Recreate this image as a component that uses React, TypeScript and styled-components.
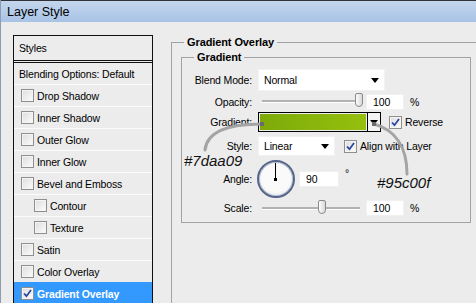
import React from "react";
import styled, { createGlobalStyle } from "styled-components";

const GlobalStyle = createGlobalStyle`
  html, body { margin: 0; padding: 0; background: #ececec; }
  body {
    font-family: "Liberation Sans", Arial, sans-serif;
    font-size: 10.5px;
    letter-spacing: -0.15px;
    color: #000;
  }
`;

const Window = styled.div`
  position: relative;
  width: 476px;
  height: 303px;
  overflow: hidden;
  box-sizing: border-box;
  background: #ececec;
  border-left: 1px solid #8e9cb1;
  display: flex;
  flex-direction: column;
`;

const TitleBar = styled.div`
  flex: none;
  height: 22px;
  box-sizing: border-box;
  border-top: 1px solid #2f3338;
  background: linear-gradient(#c4d6ed, #a8c3e6);
  padding-left: 6px;
  display: flex;
  align-items: center;
  font-size: 12.5px;
  letter-spacing: 0;
`;

const Body = styled.div`
  flex: 1;
  display: flex;
  align-items: flex-start;
  padding: 13px 0 0 12px;
`;

const StyleList = styled.div`
  flex: none;
  width: 140px;
  height: 300px;
  box-sizing: border-box;
  border: 1px solid #111;
  display: flex;
  flex-direction: column;
`;

const ListHeader = styled.div`
  height: 24px;
  border-bottom: 3px double #111;
  padding-left: 5px;
  display: flex;
  align-items: center;
`;

const ListPlain = styled.div`
  height: 21px;
  padding-left: 5px;
  display: flex;
  align-items: center;
`;

const ListItem = styled.div<{ $nested?: boolean; $active?: boolean }>`
  height: 22px;
  box-sizing: border-box;
  border-top: 1px solid ${(p) => (p.$active ? "#3399ff" : "#fbfbfb")};
  padding-left: ${(p) => (p.$nested ? 20 : 7)}px;
  display: flex;
  align-items: center;
  gap: 3px;
  background: ${(p) => (p.$active ? "#3399ff" : "transparent")};
  color: ${(p) => (p.$active ? "#fff" : "#000")};
  font-weight: ${(p) => (p.$active ? "bold" : "normal")};
`;

const Box = styled.span`
  flex: none;
  width: 13px;
  height: 13px;
  box-sizing: border-box;
  border: 1px solid #8f8f8f;
  background: linear-gradient(135deg, #dcdcdc, #fdfdfd);
  box-shadow: inset 0 0 0 1px #f4f4f4;
  display: flex;
  align-items: center;
  justify-content: center;
`;

const Check = ({ on }: { on?: boolean }) => (
  <Box>
    {on && (
      <svg width="9" height="9" viewBox="0 0 9 9">
        <path d="M1 4.5 L3.5 7.2 L8 1" fill="none" stroke="#2c45a0" strokeWidth="1.8" />
      </svg>
    )}
  </Box>
);

const Outer = styled.fieldset`
  flex: 1;
  margin: 0 -20px 0 18px;
  padding: 0 0 0 9px;
  min-width: 0;
  height: 290px;
  border: 1px solid #a2a2a2;
`;

const Legend = styled.legend<{ $shift: number }>`
  font-weight: bold;
  font-size: 11px;
  letter-spacing: -0.1px;
  line-height: 14px;
  padding: 0 3px;
  margin-left: ${(p) => p.$shift}px;
`;

const Inner = styled.fieldset`
  margin: 1px 0 0 0;
  width: 290px;
  box-sizing: border-box;
  padding: 4px 0 4px 0;
  border: 1px solid #a2a2a2;
  display: flex;
  flex-direction: column;
`;

const Row = styled.div<{ $h: number }>`
  height: ${(p) => p.$h}px;
  display: flex;
  align-items: center;
`;

const Label = styled.span`
  flex: none;
  width: 70px;
  text-align: right;
  margin-right: 6px;
`;

const Select = styled.div<{ $w: number; $h: number }>`
  width: ${(p) => p.$w}px;
  height: ${(p) => p.$h}px;
  box-sizing: border-box;
  background: #fff;
  border: 1px solid #f2f2f2;
  padding: 0 5px;
  display: flex;
  align-items: center;
  justify-content: space-between;
`;

const Arrow = () => (
  <svg width="8" height="5" viewBox="0 0 8 5">
    <path d="M0 0 H8 L4 5 Z" fill="#000" />
  </svg>
);

const Slider = styled.div`
  position: relative;
  margin-left: 4px;
  width: 98px;
  height: 2px;
  background: #b2b2b2;
  border-bottom: 1px solid #fff;
`;

const Thumb = styled.span`
  position: absolute;
  top: -7px;
  width: 8px;
  height: 14px;
  box-sizing: border-box;
  border: 1px solid #8a8a8a;
  border-radius: 2px 2px 4px 4px;
  background: linear-gradient(90deg, #fdfdfd, #d8d8d8);
`;

const NumBox = styled.div<{ $w: number; $ml: number }>`
  width: ${(p) => p.$w}px;
  height: 16px;
  margin-left: ${(p) => p.$ml}px;
  box-sizing: border-box;
  background: #fff;
  border: 1px solid #f0f0f0;
  padding-left: 6px;
  display: flex;
  align-items: center;
`;

const Unit = styled.span<{ $up?: boolean }>`
  margin-left: 6px;
  align-self: ${(p) => (p.$up ? "flex-start" : "center")};
  margin-top: ${(p) => (p.$up ? 8 : 0)}px;
`;

const GradientPicker = styled.div`
  width: 123px;
  height: 20px;
  box-sizing: border-box;
  border: 1px solid #000;
  display: flex;
`;

const Swatch = styled.div<{ $from: string; $to: string }>`
  flex: 1;
  background: linear-gradient(90deg, ${(p) => p.$from}, ${(p) => p.$to});
  box-shadow: inset 0 0 0 1px #ececec;
`;

const SwatchButton = styled.div`
  width: 12px;
  border-left: 1px solid #000;
  background: #f4f4f4;
  display: flex;
  align-items: center;
  justify-content: center;
`;

const Toggle = styled.label<{ $ml: number }>`
  margin-left: ${(p) => p.$ml}px;
  display: flex;
  align-items: center;
  gap: 3px;
`;

const Dial = styled.div`
  position: relative;
  margin-left: -1px;
  width: 38px;
  height: 38px;
  box-sizing: border-box;
  border-radius: 50%;
  border: 2px solid #56668a;
  background: radial-gradient(circle at 50% 45%, #fafafa 55%, #dfe2e8);
  box-shadow: inset 0 0 0 1px #b9c1d2;
`;

const Needle = styled.span`
  position: absolute;
  left: 16px;
  top: 1px;
  width: 1px;
  height: 16px;
  background: #000;
`;

const Hub = styled.span`
  position: absolute;
  left: 15px;
  top: 16px;
  width: 3px;
  height: 3px;
  background: #000;
`;

const Overlay = styled.svg`
  position: absolute;
  left: -1px;
  top: 0;
  pointer-events: none;
`;

const Note = styled.span<{ $x: number; $y: number }>`
  position: absolute;
  left: ${(p) => p.$x - 1}px;
  top: ${(p) => p.$y}px;
  font-style: italic;
  font-size: 15px;
  letter-spacing: 0;
  color: #111;
`;

const effects: { name: string; nested?: boolean }[] = [
  { name: "Drop Shadow" },
  { name: "Inner Shadow" },
  { name: "Outer Glow" },
  { name: "Inner Glow" },
  { name: "Bevel and Emboss" },
  { name: "Contour", nested: true },
  { name: "Texture", nested: true },
  { name: "Satin" },
  { name: "Color Overlay" },
];

export default function App() {
  return (
    <Window>
      <GlobalStyle />
      <TitleBar>Layer Style</TitleBar>
      <Body>
        <StyleList>
          <ListHeader>Styles</ListHeader>
          <ListPlain>Blending Options: Default</ListPlain>
          {effects.map((e) => (
            <ListItem key={e.name} $nested={e.nested}>
              <Check />
              {e.name}
            </ListItem>
          ))}
          <ListItem $active>
            <Check on />
            Gradient Overlay
          </ListItem>
        </StyleList>

        <Outer>
          <Legend $shift={3}>Gradient Overlay</Legend>
          <Inner>
            <Legend $shift={12}>Gradient</Legend>
            <Row $h={24}>
              <Label>Blend Mode:</Label>
              <Select $w={127} $h={22}>
                Normal
                <Arrow />
              </Select>
            </Row>
            <Row $h={19}>
              <Label>Opacity:</Label>
              <Slider>
                <Thumb style={{ left: 93 }} />
              </Slider>
              <NumBox $w={38} $ml={6}>100</NumBox>
              <Unit>%</Unit>
            </Row>
            <Row $h={22}>
              <Label>Gradient:</Label>
              <GradientPicker>
                <Swatch $from="#7daa09" $to="#95c00f" />
                <SwatchButton>
                  <Arrow />
                </SwatchButton>
              </GradientPicker>
              <Toggle $ml={8}>
                <Check on />
                Reverse
              </Toggle>
            </Row>
            <Row $h={26}>
              <Label>Style:</Label>
              <Select $w={77} $h={20}>
                Linear
                <Arrow />
              </Select>
              <Toggle $ml={9}>
                <Check on />
                Align with Layer
              </Toggle>
            </Row>
            <Row $h={39}>
              <Label>Angle:</Label>
              <Dial>
                <Needle />
                <Hub />
              </Dial>
              <NumBox $w={40} $ml={4}>90</NumBox>
              <Unit $up>°</Unit>
            </Row>
            <Row $h={20}>
              <Label>Scale:</Label>
              <Slider>
                <Thumb style={{ left: 56 }} />
              </Slider>
              <NumBox $w={38} $ml={6}>100</NumBox>
              <Unit>%</Unit>
            </Row>
          </Inner>
        </Outer>
      </Body>

      <Overlay width="476" height="303">
        <path d="M262 124 C232 124 207 130 205 150" fill="none" stroke="#a4a4a4" strokeWidth="3" strokeLinecap="round" />
        <path d="M374 124 C396 130 407 148 407 174" fill="none" stroke="#a4a4a4" strokeWidth="3" strokeLinecap="round" />
        <rect x="260" y="122" width="4" height="4" fill="#6b6b6b" />
        <rect x="372" y="122" width="4" height="4" fill="#6b6b6b" />
      </Overlay>
      <Note $x={184} $y={152}>#7daa09</Note>
      <Note $x={377} $y={174}>#95c00f</Note>
    </Window>
  );
}
